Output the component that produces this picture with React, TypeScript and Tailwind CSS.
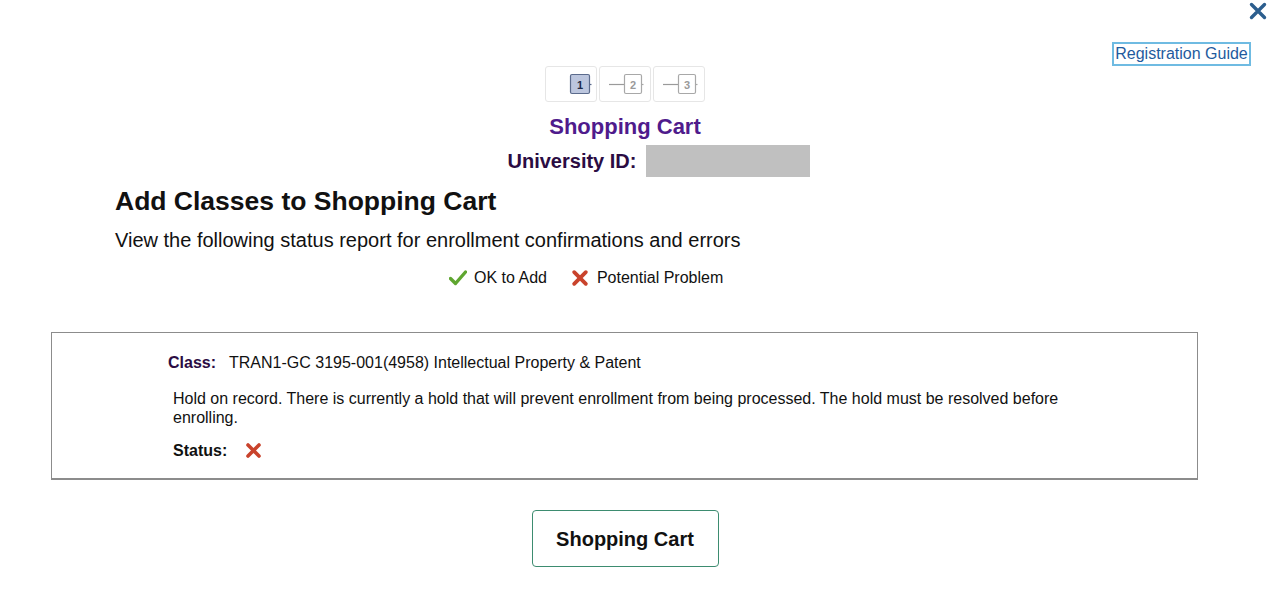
import React from "react";

const STEPS = [1, 2, 3];

function StepIcon({ n, active }: { n: number; active: boolean }) {
  return (
    <svg width="52" height="36" viewBox="0 0 52 36">
      {!active && <line x1="9" y1="17.5" x2="24" y2="17.5" stroke="#9a9a9a" strokeWidth="1.2" />}
      <rect
        x="24.5"
        y="7.5"
        width={active ? 19 : 17}
        height="19"
        rx="1.5"
        fill={active ? "#bcc6de" : "#ffffff"}
        stroke={active ? "#5b6b8c" : "#a8a8a8"}
        strokeWidth="1.2"
      />
      <line
        x1={active ? 43.5 : 41.5}
        y1="17.5"
        x2={active ? 45.5 : 43.5}
        y2="17.5"
        stroke={active ? "#5b6b8c" : "#a8a8a8"}
        strokeWidth="1.2"
      />
      <text
        x={active ? 34 : 33}
        y="21.5"
        textAnchor="middle"
        fontSize="11"
        fontWeight="700"
        fontFamily="Liberation Sans, Arial, sans-serif"
        fill={active ? "#1e2a4a" : "#9a9a9a"}
      >
        {n}
      </text>
    </svg>
  );
}

function CheckMark() {
  return (
    <svg width="18" height="16" viewBox="0 0 18 16">
      <path d="M1.5 8.5 L6.5 13.5 L16.5 2" fill="none" stroke="#5fa630" strokeWidth="3.4" strokeLinecap="round" strokeLinejoin="round" />
    </svg>
  );
}

function RedX({ size = 17 }: { size?: number }) {
  return (
    <svg width={size} height={size} viewBox="0 0 17 17">
      <path d="M3 3 L14 14 M14 3 L3 14" fill="none" stroke="#c9432c" strokeWidth="3.6" strokeLinecap="round" />
    </svg>
  );
}

export default function App() {
  return (
    <div className="relative h-[592px] w-[1280px] overflow-hidden bg-white font-['Liberation_Sans',Arial,sans-serif] text-[#111]">
      {/* Close button */}
      <button className="absolute right-[13px] top-[2px]" aria-label="Close">
        <svg width="18" height="18" viewBox="0 0 18 18">
          <path d="M2.5 2.5 L15.5 15.5 M15.5 2.5 L2.5 15.5" fill="none" stroke="#2c5e8e" strokeWidth="3.4" strokeLinecap="round" />
        </svg>
      </button>

      {/* Registration guide */}
      <div className="flex justify-end pr-[29px] pt-[42px]">
        <a
          href="#"
          className="flex h-[24px] w-[139px] items-center justify-center border-2 border-[#6fbbe2] text-[16px] leading-none text-[#1f5b9e]"
        >
          Registration Guide
        </a>
      </div>

      <div className="w-[1250px]">
        {/* Stepper */}
        <div className="flex justify-center gap-[2px]">
          {STEPS.map((s) => (
            <div key={s} className="h-[36px] w-[52px] rounded-[3px] border border-[#e6e6e6]">
              <StepIcon n={s} active={s === 1} />
            </div>
          ))}
        </div>

        <h2 className="mt-[12px] text-center text-[22px] font-bold leading-[26px] text-[#4f1b8c]">Shopping Cart</h2>

        <div className="mt-[5px] flex items-center justify-center pl-[68px]">
          <span className="text-[20px] font-bold leading-[24px] text-[#2b0c43]">University ID:</span>
          <div className="ml-[10px] h-[32px] w-[164px] bg-[#c0c0c0]" />
        </div>

        <h1 className="ml-[115px] mt-[9px] text-[26.5px] font-bold leading-[30px] text-[#111]">
          Add Classes to Shopping Cart
        </h1>
        <p className="ml-[115px] mt-[12px] text-[20px] leading-[24px] text-[#111]">
          View the following status report for enrollment confirmations and errors
        </p>

        {/* Legend */}
        <div className="ml-[449px] mt-[16px] flex items-center text-[16px] leading-[20px]">
          <CheckMark />
          <span className="ml-[7px]">OK to Add</span>
          <span className="ml-[24px] flex items-center">
            <RedX size={18} />
          </span>
          <span className="ml-[8px]">Potential Problem</span>
        </div>
      </div>

      {/* Status report */}
      <div className="ml-[51px] mt-[44px] w-[1147px] border border-b-2 border-[#8c8c8c] pb-[18px] pt-[20px] text-[16px] leading-[19px]">
        <div className="flex pl-[116px]">
          <span className="font-bold text-[#2b0c43]">Class:</span>
          <span className="ml-[13px]">TRAN1-GC 3195-001(4958) Intellectual Property &amp; Patent</span>
        </div>
        <p className="ml-[121px] mt-[17px] w-[950px]">
          Hold on record. There is currently a hold that will prevent enrollment from being processed. The hold must be resolved before enrolling.
        </p>
        <div className="ml-[121px] mt-[14px] flex items-center">
          <span className="font-bold">Status:</span>
          <span className="ml-[18px]">
            <RedX size={17} />
          </span>
        </div>
      </div>

      <div className="flex w-[1250px] justify-center pt-[30px]">
        <button className="h-[57px] w-[187px] rounded-[4px] border-[1.5px] border-[#3d8c70] bg-white text-[20px] font-bold text-[#111]">
          Shopping Cart
        </button>
      </div>
    </div>
  );
}
